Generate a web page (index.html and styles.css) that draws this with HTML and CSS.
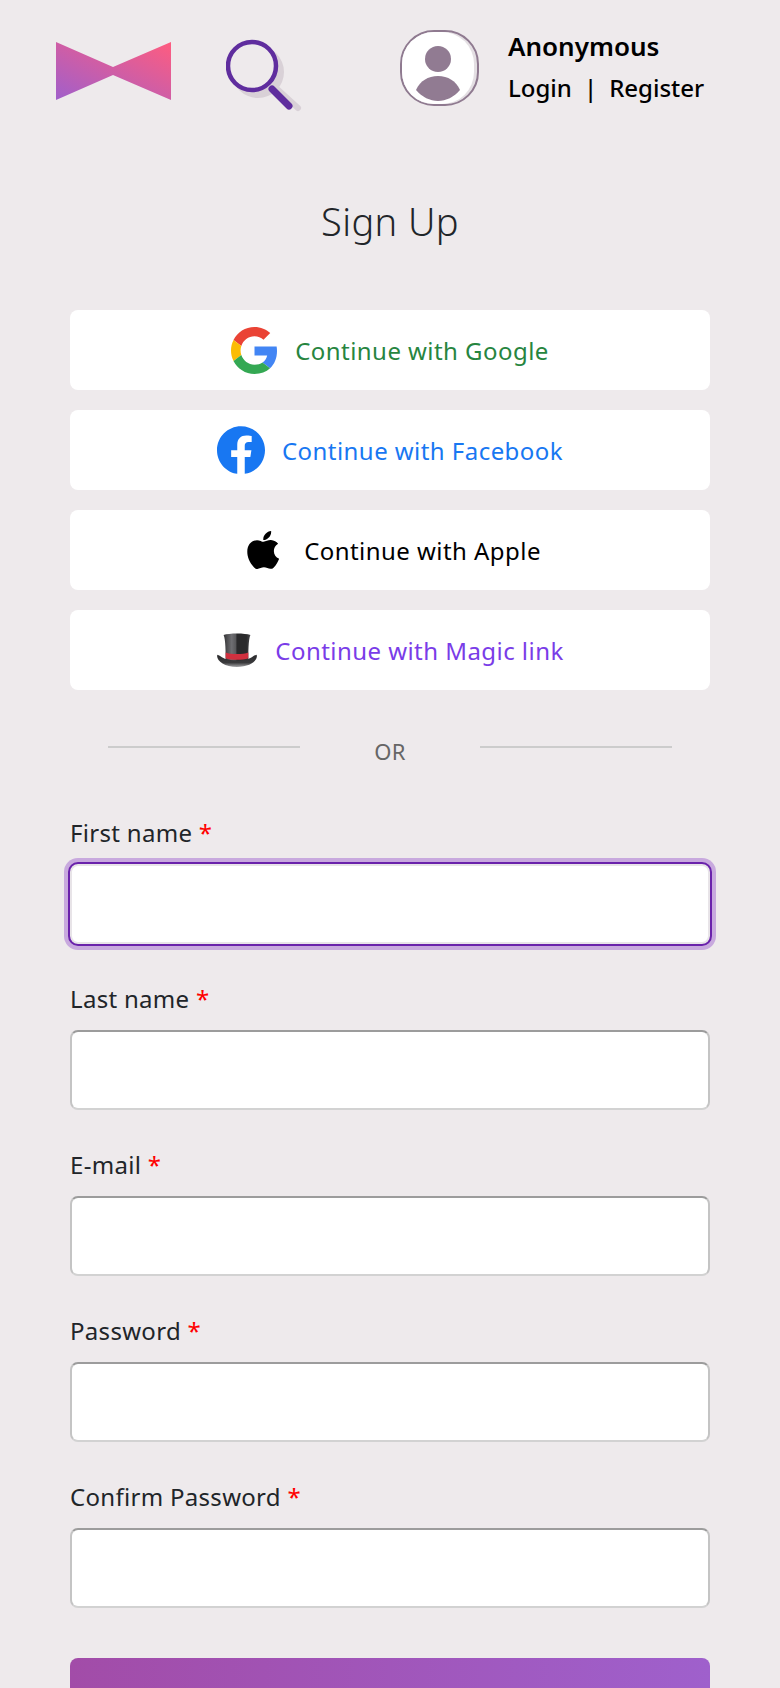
FILE: index.html
```html
<!DOCTYPE html>
<html lang="en">

<head>
    <meta charset="UTF-8">
    <meta name="viewport" content="width=device-width, initial-scale=1.0">
    <title>Sign Up</title>
    <link rel="stylesheet" href="styles.css">
</head>

<body>

    <header class="top_bar">
        <svg class="logo" width="115" height="58" viewBox="0 0 115 58">
            <defs>
                <linearGradient id="bow" x1="0" y1="1" x2="1" y2="0">
                    <stop offset="0" stop-color="#a05fcb" />
                    <stop offset="1" stop-color="#ff5c7f" />
                </linearGradient>
            </defs>
            <polygon points="0,0 57,25 115,0 115,58 57,33 0,58" fill="url(#bow)" />
        </svg>
        <svg class="search" width="80" height="76" viewBox="0 0 80 76">
            <line x1="50" y1="50" x2="72" y2="70" stroke="#d9d1d7" stroke-width="6" stroke-linecap="round" />
            <circle cx="32" cy="34" r="26" fill="#d9d1d7" />
            <circle cx="26" cy="28" r="24" fill="#eeeaec" stroke="#5f2d9e" stroke-width="4.5" />
            <line x1="46" y1="51" x2="63" y2="68" stroke="#5f2d9e" stroke-width="7" stroke-linecap="round" />
        </svg>
        <svg class="avatar" width="80" height="76" viewBox="0 0 80 76">
            <rect x="1" y="1" width="77" height="74" rx="33" fill="#e4dfe3" stroke="#8f7a90" stroke-width="2" />
            <rect x="2" y="2" width="72" height="72" rx="32" fill="#fff" />
            <circle cx="38" cy="29" r="13" fill="#917b92" />
            <path d="M16 60C20 51 28 46 38 46S56 51 60 60C54 67 46 71 38 71S22 67 16 60z" fill="#917b92" />
        </svg>
        <div class="user_box">
            <div class="user_name">Anonymous</div>
            <div class="user_links"><a href="#">Login</a><span class="sep">|</span><a href="#">Register</a></div>
        </div>
    </header>

    <section class="main_box">
        <h1 class="page_title">Sign Up</h1>

        <div class="social_list">
            <button class="social_btn google">
                <svg width="47" height="47" viewBox="0 0 48 48">
                    <path fill="#EA4335" d="M24 9.5c3.54 0 6.71 1.22 9.21 3.6l6.85-6.85C35.9 2.38 30.47 0 24 0 14.62 0 6.51 5.38 2.56 13.22l7.98 6.19C12.43 13.72 17.74 9.5 24 9.5z" />
                    <path fill="#4285F4" d="M46.98 24.55c0-1.57-.15-3.09-.38-4.55H24v9.02h12.94c-.58 2.96-2.26 5.48-4.78 7.18l7.73 6c4.51-4.18 7.09-10.36 7.09-17.65z" />
                    <path fill="#FBBC05" d="M10.53 28.59c-.48-1.45-.76-2.99-.76-4.59s.27-3.14.76-4.59l-7.98-6.19C.92 16.46 0 20.12 0 24c0 3.88.92 7.54 2.56 10.78l7.97-6.19z" />
                    <path fill="#34A853" d="M24 48c6.48 0 11.93-2.13 15.89-5.81l-7.73-6c-2.15 1.45-4.92 2.3-8.16 2.3-6.26 0-11.57-4.22-13.47-9.91l-7.98 6.19C6.51 42.62 14.62 48 24 48z" />
                </svg>
                Continue with Google
            </button>
            <button class="social_btn facebook">
                <svg width="48" height="48" viewBox="0 0 24 24">
                    <path fill="#1877f2" d="M24 12.073c0-6.627-5.373-12-12-12s-12 5.373-12 12c0 5.99 4.388 10.954 10.125 11.854v-8.385H7.078v-3.47h3.047V9.43c0-3.007 1.792-4.669 4.533-4.669 1.312 0 2.686.235 2.686.235v2.953H15.83c-1.491 0-1.956.925-1.956 1.874v2.25h3.328l-.532 3.47h-2.796v8.385C19.612 23.027 24 18.062 24 12.073z" />
                </svg>
                Continue with Facebook
            </button>
            <button class="social_btn apple">
                <svg class="apple_icon" width="34" height="38" viewBox="3.8 3 16.2 18">
                    <path fill="#000" d="M17.05 20.28c-.98.95-2.05.8-3.08.35-1.09-.46-2.09-.48-3.24 0-1.44.62-2.2.44-3.06-.35C2.79 15.25 3.51 7.59 9.05 7.31c1.35.07 2.29.74 3.08.8 1.18-.24 2.31-.93 3.57-.84 1.51.12 2.65.72 3.4 1.8-3.12 1.87-2.38 5.98.48 7.13-.57 1.5-1.31 2.99-2.54 4.09zM12.03 7.25c-.15-2.23 1.66-4.07 3.74-4.25.29 2.58-2.34 4.5-3.74 4.25z" />
                </svg>
                Continue with Apple
            </button>
            <button class="social_btn magic">
                <svg width="42" height="34" viewBox="0 0 40 33">
                    <defs>
                        <linearGradient id="crown" x1="0" y1="0" x2="1" y2="0">
                            <stop offset="0" stop-color="#333335" />
                            <stop offset=".3" stop-color="#6f6f73" />
                            <stop offset=".45" stop-color="#59595c" />
                            <stop offset=".5" stop-color="#2a2a2c" />
                            <stop offset=".85" stop-color="#2a2a2c" />
                            <stop offset="1" stop-color="#4a4a4d" />
                        </linearGradient>
                        <linearGradient id="brim" x1="0" y1="0" x2="0" y2="1">
                            <stop offset="0" stop-color="#2a2a2c" />
                            <stop offset=".65" stop-color="#3a3a3c" />
                            <stop offset="1" stop-color="#a3a3a6" />
                        </linearGradient>
                    </defs>
                    <path d="M1 21C4 22 7 25 9 25H31C33 25 36 22 39 21 41 26 33 33 20 33S-1 26 1 21z" fill="url(#brim)" />
                    <path d="M7 2C12 0 28 0 33 2 31 6 31 20 31 25 26 27 14 27 9 25 9 20 9 6 7 2z" fill="url(#crown)" />
                    <path d="M9 19C14 21 26 21 31 19V24.500C26 26.500 14 26.500 9 24.500z" fill="#d0303f" />
                </svg>
                Continue with Magic link
            </button>
        </div>

        <div class="or_row">
            <span class="or_line"></span>
            <span class="or_text">OR</span>
            <span class="or_line"></span>
        </div>

        <form class="signup_form">
            <div class="field">
                <label class="field_label" for="first">First name <span class="req">*</span></label>
                <input class="field_input focused" type="text" id="first">
            </div>
            <div class="field">
                <label class="field_label" for="last">Last name <span class="req">*</span></label>
                <input class="field_input" type="text" id="last">
            </div>
            <div class="field">
                <label class="field_label" for="email">E-mail <span class="req">*</span></label>
                <input class="field_input" type="email" id="email">
            </div>
            <div class="field">
                <label class="field_label" for="pass">Password <span class="req">*</span></label>
                <input class="field_input" type="password" id="pass">
            </div>
            <div class="field">
                <label class="field_label" for="pass2">Confirm Password <span class="req">*</span></label>
                <input class="field_input" type="password" id="pass2">
            </div>
            <div class="submit_btn"></div>
        </form>
    </section>

</body>

</html>
```

FILE: styles.css
```css
* {
    box-sizing: border-box;
}

html,
body {
    height: 1688px;
    overflow: hidden;
}

body {
    margin: 0;
    background-color: #eeeaec;
    font-family: "Noto Sans", "Open Sans", sans-serif;
    color: #212529;
}

.top_bar {
    height: 130px;
    display: flex;
    align-items: flex-start;
    padding-left: 56px;
}

.logo {
    margin-top: 42px;
}

.search {
    margin-top: 38px;
    margin-left: 55px;
}

.avatar {
    margin-top: 30px;
    margin-left: 94px;
}

.user_box {
    margin-left: 28px;
    margin-top: 27px;
    color: #000;
}

.user_name {
    font-size: 26px;
    font-weight: 600;
    line-height: 38px;
}

.user_links {
    margin-top: 4px;
    font-size: 24px;
    font-weight: 500;
    line-height: 38px;
    display: flex;
}

.user_links a {
    color: #000;
    text-decoration: none;
}

.sep {
    margin: 0 12px;
}

.main_box {
    padding: 0 70px;
}

.page_title {
    margin: 61px 0 0;
    height: 60px;
    line-height: 60px;
    text-align: center;
    font-size: 38px;
    font-weight: 300;
    letter-spacing: .4px;
}

.social_list {
    margin-top: 59px;
    display: flex;
    flex-direction: column;
    gap: 20px;
}

.social_btn {
    height: 80px;
    width: 100%;
    border: none;
    border-radius: 8px;
    background-color: #fff;
    font-family: inherit;
    font-size: 24px;
    letter-spacing: .45px;
    display: flex;
    align-items: center;
    justify-content: center;
    gap: 17px;
    padding: 0;
}

.google {
    color: #27853f;
}

.facebook {
    color: #1877f2;
}

.apple {
    color: #000;
}

.apple_icon {
    margin: 0 7px;
}

.magic {
    color: #7a3ce8;
}

.or_row {
    margin-top: 41px;
    padding: 0 38px;
    height: 40px;
    display: flex;
    align-items: center;
    justify-content: space-between;
}

.or_line {
    width: 192px;
    height: 2px;
    margin-bottom: 9px;
    background-color: #ccc;
}

.or_text {
    font-size: 22px;
    letter-spacing: .3px;
    color: #666;
}

.signup_form {
    margin-top: 46px;
    display: flex;
    flex-direction: column;
    gap: 39px;
}

.field_label {
    display: block;
    height: 32px;
    line-height: 32px;
    margin-bottom: 15px;
    font-size: 24px;
    letter-spacing: .3px;
}

.req {
    color: #f00;
}

.field_input {
    display: block;
    width: 100%;
    height: 80px;
    background-color: #fff;
    border: 2px solid #d2d2d2;
    border-top-color: #9c9c9c;
    border-left-color: #c4c4c4;
    border-right-color: #c4c4c4;
    border-radius: 8px;
}

.field_input.focused {
    border: 2px solid #e8e4e8;
    outline: 2px solid #6a22ab;
    box-shadow: 0 0 0 6px #c8a9de;
}

.submit_btn {
    margin-top: 11px;
    height: 80px;
    border-radius: 8px;
    background: linear-gradient(90deg, #a24ca8, #9f60cc);
}
```
